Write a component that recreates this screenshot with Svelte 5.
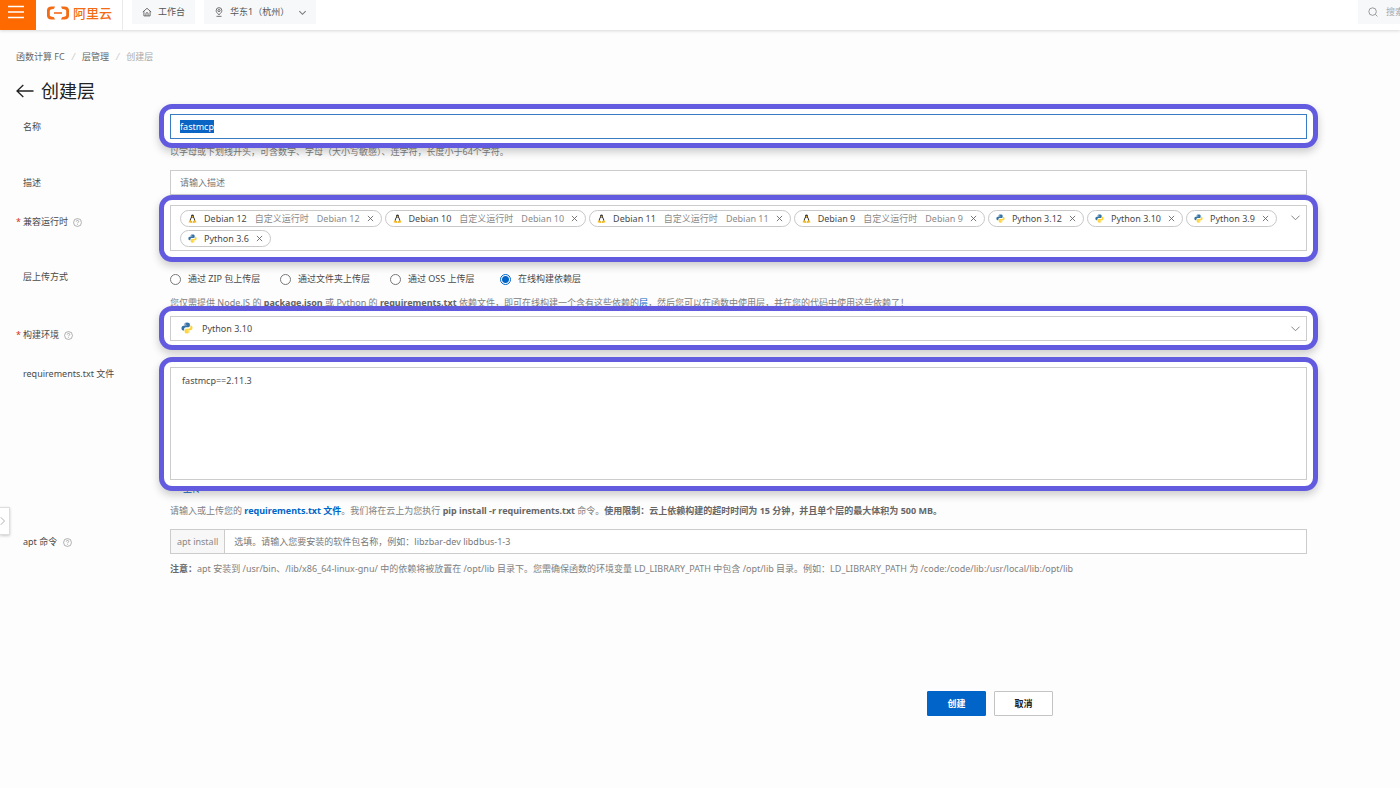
<script lang="ts">
  import { onMount } from 'svelte';

  let nameInput: HTMLInputElement;
  let name = $state('fastmcp');
  let description = $state('');
  let method = $state('online');
  let buildEnv = $state('Python 3.10');
  let requirements = $state('fastmcp==2.11.3');
  let apt = $state('');

  let runtimes = $state([
    { icon: 'linux', name: 'Debian 12', custom: true },
    { icon: 'linux', name: 'Debian 10', custom: true },
    { icon: 'linux', name: 'Debian 11', custom: true },
    { icon: 'linux', name: 'Debian 9', custom: true },
    { icon: 'python', name: 'Python 3.12', custom: false },
    { icon: 'python', name: 'Python 3.10', custom: false },
    { icon: 'python', name: 'Python 3.9', custom: false },
    { icon: 'python', name: 'Python 3.6', custom: false },
  ]);

  const methods = [
    { value: 'zip', label: '通过 ZIP 包上传层' },
    { value: 'folder', label: '通过文件夹上传层' },
    { value: 'oss', label: '通过 OSS 上传层' },
    { value: 'online', label: '在线构建依赖层' },
  ];

  function removeRuntime(name: string) {
    runtimes = runtimes.filter(r => r.name !== name);
  }

  onMount(() => {
    nameInput.focus();
    nameInput.select();
  });
</script>

{#snippet linux()}
  <svg class="chip-icon" viewBox="0 0 20 20" aria-hidden="true">
    <path d="M10 1c-2.500 0-3.500 1.800-3.300 4.300.1 2-1 3.200-2 5.200C3.800 12.500 3.800 15 5 17h10c1.200-2 1.200-4.500.3-6.500-1-2-2.100-3.200-2-5.200C13.500 2.800 12.500 1 10 1z" fill="#3a3a3a" />
    <path d="M10 7.500c-2.200 0-3.500 3-3.500 6.500 0 2 1.500 3.500 3.500 3.500s3.500-1.500 3.500-3.500c0-3.500-1.300-6.500-3.500-6.500z" fill="#fff" />
    <path d="M7.500 5.500 10 4.500l2.500 1-2.500 2.500z" fill="#f5b81c" />
    <path d="M1 18.500 4.500 12.500l5.500 6-2 1.300zM19 18.500 15.500 12.500l-5.500 6 2 1.300z" fill="#f5b81c" />
  </svg>
{/snippet}

{#snippet python()}
  <svg class="chip-icon" viewBox="0 0 24 24" aria-hidden="true">
    <path d="M11.900 1C7.500 1 7 2.900 7 4.500v2.300h5.200v.8H4.700C2.500 7.600 1 9.500 1 12.300s1.300 4.500 3.300 4.500h2v-2.700c0-2 1.700-3.500 3.600-3.500h5c1.600 0 2.800-1.300 2.800-2.900V4.500C17.700 2.400 16 1 11.900 1z" fill="#3673a5" />
    <path d="M12.100 23c4.400 0 4.900-1.900 4.900-3.500v-2.300h-5.200v-.8h7.500c2.200 0 3.700-1.900 3.700-4.700s-1.300-4.500-3.300-4.500h-1v2.700c0 2-1.700 3.500-3.600 3.500h-5c-1.600 0-2.800 1.300-2.800 2.900v3.200C7.300 21.600 8 23 12.100 23z" fill="#fcd43c" />
    <circle cx="9.400" cy="4.200" r="1" fill="#fff" />
    <circle cx="14.600" cy="19.800" r="1" fill="#fff" />
  </svg>
{/snippet}

{#snippet help()}
  <svg class="help" viewBox="0 0 16 16" aria-hidden="true">
    <circle cx="8" cy="8" r="7" />
    <path d="M5.800 6.400C5.800 5 6.800 4.200 8 4.200s2.200.8 2.200 2c0 1.500-2.200 1.700-2.200 3.300M8 11v1.300" />
  </svg>
{/snippet}

{#snippet chevron()}
  <svg class="chevron" viewBox="0 0 10 10" aria-hidden="true"><path d="M.5 3 5 7.500 9.500 3" /></svg>
{/snippet}

<header class="topbar">
  <button class="menu" aria-label="菜单">
    <svg viewBox="0 0 16 14"><path d="M0 1.500h16M0 7h16M0 12.500h16" /></svg>
  </button>
  <a class="logo" href="#home">
    <svg viewBox="0 0 24 14" aria-hidden="true">
      <path d="M9 .5H5.500C2.700.5 1 2 1 4.300v5.400c0 2.300 1.700 3.800 4.500 3.800H9l-1-2.300-3-.6c-.8-.2-1.200-.6-1.200-1.300V4.700c0-.7.4-1.100 1.200-1.300l3-.6zM15 .5h3.500C21.300.5 23 2 23 4.300v5.400c0 2.300-1.700 3.800-4.500 3.800H15l1-2.300 3-.6c.8-.2 1.200-.6 1.200-1.300V4.700c0-.7-.4-1.100-1.200-1.300l-3-.6z" />
      <path d="M8 6.200h8v1.600H8z" />
    </svg>
    <span>阿里云</span>
  </a>
  <a class="pill" href="#workbench">
    <svg viewBox="0 0 12 12" aria-hidden="true"><path d="M1 6 6 1.500 11 6M2.300 5v5.700h7.400V5M4.700 10.500V8a1.300 1.300 0 0 1 2.600 0v2.500" /></svg>
    工作台
  </a>
  <button class="pill region">
    <svg viewBox="0 0 12 12" aria-hidden="true"><path d="M6 9.300C3.800 7.500 2.600 6 2.600 4.200a3.400 3.400 0 0 1 6.800 0C9.400 6 8.200 7.500 6 9.300zM3 11.200h6" /><circle cx="6" cy="4.300" r="1.300" /></svg>
    华东1（杭州）
    {@render chevron()}
  </button>
  <label class="search">
    <svg viewBox="0 0 12 12" aria-hidden="true"><circle cx="5.500" cy="5.500" r="4.500" /><path d="m9 9 2.300 2.300" /></svg>
    <input type="search" placeholder="搜索..." aria-label="搜索" />
  </label>
</header>

<button class="drawer" aria-label="展开侧栏">
  <svg viewBox="0 0 8 12"><path d="m1 1 5 5-5 5" /></svg>
</button>

<main>
  <nav class="breadcrumb">
    <a href="#fc">函数计算 FC</a><i>/</i><a href="#layers">层管理</a><i>/</i><span>创建层</span>
  </nav>

  <h1>
    <a href="#layers" aria-label="返回"><svg viewBox="0 0 18 14"><path d="M17.500 7H1M7.300 1 1 7l6.300 6" /></svg></a>
    创建层
  </h1>

  <form onsubmit={e => e.preventDefault()}>
    <div class="row">
      <label class="label" for="name">名称</label>
      <div class="content">
        <div class="highlight">
          <input id="name" class="control" type="text" bind:value={name} bind:this={nameInput} autocomplete="off" spellcheck="false" />
        </div>
        <p class="hint">以字母或下划线开头，可含数字、字母（大小写敏感）、连字符，长度小于64个字符。</p>
      </div>
    </div>

    <div class="row">
      <label class="label" for="description">描述</label>
      <div class="content">
        <input id="description" class="control" type="text" placeholder="请输入描述" bind:value={description} />
      </div>
    </div>

    <div class="row runtime">
      <div class="label required" id="runtime-label">兼容运行时 {@render help()}</div>
      <div class="content">
        <div class="highlight tall">
          <div class="control chips" role="group" aria-labelledby="runtime-label">
            <div class="chip-list">
              {#each runtimes as runtime (runtime.name)}
                <span class="chip">
                  {#if runtime.icon === 'linux'}{@render linux()}{:else}{@render python()}{/if}
                  <span>{runtime.name}</span>
                  {#if runtime.custom}
                    <span class="muted">自定义运行时</span>
                    <span class="muted">{runtime.name}</span>
                  {/if}
                  <button type="button" aria-label="移除 {runtime.name}" onclick={() => removeRuntime(runtime.name)}>
                    <svg viewBox="0 0 8 8"><path d="m1 1 6 6M7 1 1 7" /></svg>
                  </button>
                </span>
              {/each}
            </div>
            <button type="button" class="toggle" aria-label="展开">{@render chevron()}</button>
          </div>
        </div>
      </div>
    </div>

    <div class="row method">
      <div class="label" id="method-label">层上传方式</div>
      <div class="content">
        <div class="radios" role="radiogroup" aria-labelledby="method-label">
          {#each methods as m}
            <label><input type="radio" name="method" value={m.value} bind:group={method} />{m.label}</label>
          {/each}
        </div>
        <p class="hint">您仅需提供 Node.JS 的 <b>package.json</b> 或 Python 的 <b>requirements.txt</b> 依赖文件，即可在线构建一个含有这些依赖的<a href="#layer">层</a>，然后您可以在函数中使用层，并在您的代码中使用这些依赖了！</p>
      </div>
    </div>

    <div class="row env">
      <label class="label required" for="env">构建环境 {@render help()}</label>
      <div class="content">
        <div class="highlight select">
          <select id="env" class="control" bind:value={buildEnv}>
            <option>Python 3.12</option>
            <option>Python 3.10</option>
            <option>Python 3.9</option>
          </select>
          {@render python()}
          {@render chevron()}
        </div>
      </div>
    </div>

    <div class="row requirements">
      <label class="label" for="requirements">requirements.txt 文件</label>
      <div class="content">
        <div class="highlight tall">
          <textarea id="requirements" class="control" bind:value={requirements} spellcheck="false"></textarea>
        </div>
        <button type="button" class="upload">上传</button>
        <p class="hint">请输入或上传您的 <a href="#file"><b>requirements.txt 文件</b></a>。我们将在云上为您执行 <b>pip install -r requirements.txt</b> 命令。<b>使用限制：云上依赖构建的超时时间为 15 分钟，并且单个层的最大体积为 500 MB。</b></p>
      </div>
    </div>

    <div class="row">
      <label class="label" for="apt">apt 命令 {@render help()}</label>
      <div class="content">
        <div class="control addon">
          <span>apt install</span>
          <input id="apt" type="text" placeholder="选填。请输入您要安装的软件包名称，例如：libzbar-dev libdbus-1-3" bind:value={apt} />
        </div>
        <p class="hint"><b>注意：</b>apt 安装到 /usr/bin、/lib/x86_64-linux-gnu/ 中的依赖将被放置在 /opt/lib 目录下。您需确保函数的环境变量 LD_LIBRARY_PATH 中包含 /opt/lib 目录。例如：LD_LIBRARY_PATH 为 /code:/code/lib:/usr/local/lib:/opt/lib</p>
      </div>
    </div>

    <div class="actions">
      <button type="submit" class="primary">创建</button>
      <button type="button">取消</button>
    </div>
  </form>
</main>

<style>
  :global(body) { background: #fdfdfd; color: #4a4a4a; font: 9px/16px "Noto Sans", "Noto Sans CJK SC", sans-serif; overflow-x: hidden; }
  button, input, select, textarea { font: inherit; color: inherit; box-sizing: border-box; }
  button { border: 0; padding: 0; background: none; cursor: pointer; }
  a { color: inherit; text-decoration: none; }
  svg { flex: none; fill: none; stroke: currentColor; overflow: visible; }

  .topbar { display: flex; align-items: flex-start; height: 30px; background: #fff; box-shadow: 0 1px 3px rgba(0, 0, 0, 0.15); }
  .menu { width: 36px; height: 30px; background: #ff6a00; color: #fff; display: flex; padding: 5px 0 0 8px; }
  .menu svg { width: 16px; height: 14px; stroke-width: 1.500; }
  .logo { display: flex; align-items: center; gap: 3px; height: 100%; padding: 0 10px 4px; border-right: 1px solid #eaeaea; color: #f36c14; font-size: 13px; font-weight: 500; box-sizing: border-box; }
  .logo svg { width: 24px; height: 14px; fill: currentColor; stroke: none; }
  .pill { display: flex; align-items: center; gap: 6px; height: 24px; margin-left: 9px; padding: 0 10px; background: #f7f8fa; color: #555; }
  .pill svg { width: 10px; height: 10px; stroke-width: 1; }
  .region .chevron { width: 7px; height: 7px; margin-left: 4px; stroke-width: 1.500; }
  .search { display: flex; align-items: center; gap: 8px; width: 42px; height: 24px; margin-left: auto; padding-left: 10px; background: #f7f8fa; color: #888; overflow: hidden; box-sizing: border-box; }
  .search svg { width: 10px; height: 10px; }
  .search input { width: 120px; flex: none; border: 0; padding: 0; background: none; outline: none; }

  .drawer { position: absolute; top: 507px; left: 0; width: 10px; height: 28px; border: 1px solid #ddd; border-left: 0; background: #fff; color: #999; box-shadow: 0 1px 3px rgba(0, 0, 0, 0.2); display: flex; align-items: center; }
  .drawer svg { width: 6px; height: 10px; }

  main { padding: 19px 93px 40px 16px; }
  .breadcrumb { display: flex; gap: 7px; color: #666; }
  .breadcrumb i { color: #ccc; }
  .breadcrumb span { color: #aaa; }
  h1 { display: flex; align-items: center; gap: 7px; margin: 12px 0 9px; color: #222; font-size: 18px; font-weight: 400; line-height: 28px; }
  h1 a { display: flex; }
  h1 svg { width: 18px; height: 14px; stroke-width: 1.300; }

  .row { display: grid; grid-template-columns: 154px minmax(0, 1fr); margin-top: 5px; }
  .row.runtime { margin-top: 9px; }
  .row.method { margin-top: 17px; }
  .row.env { margin-top: 0; }
  .row.requirements { margin-top: 19px; }
  .label { padding-left: 7px; line-height: 26px; }
  .method .label { line-height: 18px; }
  .requirements .label { line-height: 14px; }
  .required { padding-top: 4px; }
  .env .required { padding-top: 6px; }
  .required::before { content: '*'; float: left; width: 7px; margin-left: -7px; color: #d93026; }
  .help { width: 9px; height: 9px; margin-left: 3px; vertical-align: -2px; color: #777; }
  .hint { margin: 0; line-height: 26px; color: #808080; white-space: nowrap; }
  .hint b { color: #666; }
  .hint a, .hint a b { color: #0064c8; }

  .control { display: block; width: 100%; height: 25px; border: 1px solid #ccc; padding: 0 9px; background: #fff; box-sizing: border-box; outline: none; border-radius: 0; }
  .control::placeholder, .addon input::placeholder { color: #777; opacity: 1; }
  .search input::placeholder { color: #aaa; opacity: 1; }
  #name { border-color: #3a7cc4; }
  #name::selection { background: #0a64c4; color: #fff; }

  .highlight { position: relative; z-index: 1; }
  .highlight::before { content: ''; position: absolute; inset: -10px -11px -9px; z-index: -1; border: 5px solid #635bdf; border-radius: 13px; background: #fff; box-shadow: 0 4px 8px rgba(0, 0, 0, 0.2); box-sizing: border-box; }
  .highlight.tall::before { bottom: -11px; }

  .chips { display: flex; height: auto; min-height: 46px; padding: 4px 6px 3px 9px; }
  .chip-list { display: flex; flex: 1; flex-wrap: wrap; align-content: flex-start; gap: 3px; }
  .chip { display: flex; align-items: center; gap: 7px; height: 17px; padding: 0 7px; border: 1px solid #c8c8c8; border-radius: 9px; background: #fff; white-space: nowrap; box-sizing: border-box; }
  .chip-icon { width: 9px; height: 9px; stroke: none; }
  .chip button { display: flex; color: #666; }
  .chip button svg { width: 7px; height: 7px; }
  .muted { margin-left: 1px; color: #8a8a8a; }
  .toggle { align-self: flex-start; padding: 3px 0; }
  .chevron { display: block; width: 9px; height: 9px; color: #777; }

  .radios { display: flex; height: 22px; }
  .radios label { display: flex; align-items: center; gap: 7px; width: 110px; white-space: nowrap; }
  .radios input { appearance: none; width: 11px; height: 11px; margin: 0; border: 1px solid #777; border-radius: 50%; background: #fff; }
  .radios input:checked { border-color: #0064c8; background: radial-gradient(circle, #0064c8 0 3px, #fff 4px); }

  .select select { appearance: none; padding: 0 31px; }
  .select .chip-icon { position: absolute; top: 6px; left: 11px; width: 12px; height: 12px; pointer-events: none; }
  .select .chevron { position: absolute; top: 8px; right: 7px; pointer-events: none; }

  textarea.control { height: 113px; padding: 5px 11px; resize: none; }
  .upload { display: block; height: 18px; margin-left: 13px; color: #0064c8; line-height: 16px; }

  .addon { display: flex; margin-bottom: 2px; padding: 0; }
  .addon span { padding: 0 6px; border-right: 1px solid #ccc; background: #f7f7f7; color: #888; line-height: 23px; white-space: nowrap; }
  .addon input { flex: 1; min-width: 0; border: 0; padding: 0 9px; background: none; outline: none; }

  .actions { display: flex; justify-content: flex-end; gap: 8px; margin-top: 109px; padding-right: 254px; }
  .actions button { width: 59px; height: 25px; border: 1px solid #c4c4c4; border-radius: 1px; background: #fff; color: #222; font-weight: 600; }
  .actions .primary { border-color: #0064c8; background: #0064c8; color: #fff; }
</style>
